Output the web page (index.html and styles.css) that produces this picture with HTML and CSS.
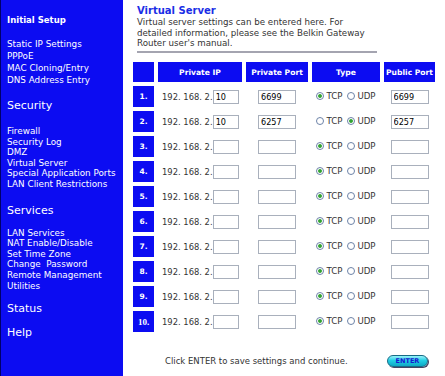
FILE: index.html
```html
<!DOCTYPE html>
<html>
<head>
<meta charset="utf-8">
<link rel="stylesheet" href="styles.css">
</head>
<body>
<div class="page">
  <nav class="side">
    <div class="sec sec-small">Initial Setup</div>
    <ul class="links links-first">
      <li>Static IP Settings</li>
      <li>PPPoE</li>
      <li>MAC Cloning/Entry</li>
      <li>DNS Address Entry</li>
    </ul>
    <div class="sec">Security</div>
    <ul class="links links-mid">
      <li>Firewall</li>
      <li>Security Log</li>
      <li>DMZ</li>
      <li>Virtual Server</li>
      <li>Special Application Ports</li>
      <li>LAN Client Restrictions</li>
    </ul>
    <div class="sec">Services</div>
    <ul class="links links-last">
      <li>LAN Services</li>
      <li>NAT Enable/Disable</li>
      <li>Set Time Zone</li>
      <li>Change&nbsp; Password</li>
      <li>Remote Management</li>
      <li>Utilities</li>
    </ul>
    <div class="sec">Status</div>
    <div class="sec sec-help">Help</div>
  </nav>
  <main class="main">
    <header class="intro">
      <h1 class="title">Virtual Server</h1>
      <p class="desc">Virtual server settings can be entered here. For<br>detailed information, please see the Belkin Gateway<br>Router user's manual.</p>
    </header>
    <table class="vs">
      <thead>
        <tr>
          <th class="c-num"></th>
          <th class="c-ip">Private IP</th>
          <th class="c-pp">Private Port</th>
          <th class="c-type">Type</th>
          <th class="c-pub">Public Port</th>
        </tr>
      </thead>
      <tbody>
        <tr>
          <td class="num">1.</td>
          <td class="ip"><div class="ipwrap"><span>192. 168. 2.</span><input class="in in-ip" value="10"></div></td>
          <td class="cen"><input class="in in-port" value="6699"></td>
          <td class="cen"><div class="type"><input type="radio" name="t1" checked><span>TCP</span><input type="radio" name="t1"><span>UDP</span></div></td>
          <td class="cen"><input class="in in-port" value="6699"></td>
        </tr>
        <tr>
          <td class="num">2.</td>
          <td class="ip"><div class="ipwrap"><span>192. 168. 2.</span><input class="in in-ip" value="10"></div></td>
          <td class="cen"><input class="in in-port" value="6257"></td>
          <td class="cen"><div class="type"><input type="radio" name="t2"><span>TCP</span><input type="radio" name="t2" checked><span>UDP</span></div></td>
          <td class="cen"><input class="in in-port" value="6257"></td>
        </tr>
        <tr>
          <td class="num">3.</td>
          <td class="ip"><div class="ipwrap"><span>192. 168. 2.</span><input class="in in-ip" value=""></div></td>
          <td class="cen"><input class="in in-port" value=""></td>
          <td class="cen"><div class="type"><input type="radio" name="t3" checked><span>TCP</span><input type="radio" name="t3"><span>UDP</span></div></td>
          <td class="cen"><input class="in in-port" value=""></td>
        </tr>
        <tr>
          <td class="num">4.</td>
          <td class="ip"><div class="ipwrap"><span>192. 168. 2.</span><input class="in in-ip" value=""></div></td>
          <td class="cen"><input class="in in-port" value=""></td>
          <td class="cen"><div class="type"><input type="radio" name="t4" checked><span>TCP</span><input type="radio" name="t4"><span>UDP</span></div></td>
          <td class="cen"><input class="in in-port" value=""></td>
        </tr>
        <tr>
          <td class="num">5.</td>
          <td class="ip"><div class="ipwrap"><span>192. 168. 2.</span><input class="in in-ip" value=""></div></td>
          <td class="cen"><input class="in in-port" value=""></td>
          <td class="cen"><div class="type"><input type="radio" name="t5" checked><span>TCP</span><input type="radio" name="t5"><span>UDP</span></div></td>
          <td class="cen"><input class="in in-port" value=""></td>
        </tr>
        <tr>
          <td class="num">6.</td>
          <td class="ip"><div class="ipwrap"><span>192. 168. 2.</span><input class="in in-ip" value=""></div></td>
          <td class="cen"><input class="in in-port" value=""></td>
          <td class="cen"><div class="type"><input type="radio" name="t6" checked><span>TCP</span><input type="radio" name="t6"><span>UDP</span></div></td>
          <td class="cen"><input class="in in-port" value=""></td>
        </tr>
        <tr>
          <td class="num">7.</td>
          <td class="ip"><div class="ipwrap"><span>192. 168. 2.</span><input class="in in-ip" value=""></div></td>
          <td class="cen"><input class="in in-port" value=""></td>
          <td class="cen"><div class="type"><input type="radio" name="t7" checked><span>TCP</span><input type="radio" name="t7"><span>UDP</span></div></td>
          <td class="cen"><input class="in in-port" value=""></td>
        </tr>
        <tr>
          <td class="num">8.</td>
          <td class="ip"><div class="ipwrap"><span>192. 168. 2.</span><input class="in in-ip" value=""></div></td>
          <td class="cen"><input class="in in-port" value=""></td>
          <td class="cen"><div class="type"><input type="radio" name="t8" checked><span>TCP</span><input type="radio" name="t8"><span>UDP</span></div></td>
          <td class="cen"><input class="in in-port" value=""></td>
        </tr>
        <tr>
          <td class="num">9.</td>
          <td class="ip"><div class="ipwrap"><span>192. 168. 2.</span><input class="in in-ip" value=""></div></td>
          <td class="cen"><input class="in in-port" value=""></td>
          <td class="cen"><div class="type"><input type="radio" name="t9" checked><span>TCP</span><input type="radio" name="t9"><span>UDP</span></div></td>
          <td class="cen"><input class="in in-port" value=""></td>
        </tr>
        <tr>
          <td class="num num-serif">10.</td>
          <td class="ip"><div class="ipwrap"><span>192. 168. 2.</span><input class="in in-ip" value=""></div></td>
          <td class="cen"><input class="in in-port" value=""></td>
          <td class="cen"><div class="type"><input type="radio" name="t10" checked><span>TCP</span><input type="radio" name="t10"><span>UDP</span></div></td>
          <td class="cen"><input class="in in-port" value=""></td>
        </tr>
      </tbody>
    </table>
    <div class="footer">
      <span class="hint">Click ENTER to save settings and continue.</span>
      <button class="enter">ENTER</button>
    </div>
  </main>
</div>
</body>
</html>
```
FILE: styles.css
```css
html, body {
  margin: 0;
  padding: 0;
  background: #ffffff;
}
body {
  font-family: "DejaVu Sans", Verdana, sans-serif;
  width: 445px;
  height: 376px;
  overflow: hidden;
}
.page {
  display: flex;
  height: 376px;
}
.side {
  flex: none;
  width: 123px;
  background: #0c0cf2;
  border-left: 1px solid #00006a;
  color: #ffffff;
  padding: 14px 0 0 6px;
  box-sizing: border-box;
}
.sec {
  font-size: 11px;
  line-height: 14px;
  height: 14px;
}
.sec-small {
  font-size: 8.5px;
  font-weight: bold;
  line-height: 12px;
  height: 12px;
}
.links {
  list-style: none;
  margin: 0;
  padding: 0;
  font-size: 8.8px;
  line-height: 10.6px;
  white-space: nowrap;
}
.links-first {
  line-height: 12px;
  margin-top: 12px;
  margin-bottom: 13px;
}
.links-mid {
  margin-top: 13px;
  margin-bottom: 14px;
}
.links-last {
  margin-top: 10px;
  margin-bottom: 11px;
}
.sec-help {
  margin-top: 10px;
}
.main {
  flex: 1;
}
.intro {
  margin-left: 14px;
  width: 240px;
  padding-top: 4px;
  border-bottom: 2px solid #a4a4b0;
  padding-bottom: 2px;
}
.title {
  margin: 0;
  font-size: 10px;
  line-height: 13px;
  font-weight: bold;
  color: #1a2ee6;
}
.desc {
  margin: 0;
  font-size: 8.7px;
  line-height: 10.7px;
  color: #333333;
  white-space: nowrap;
}
.vs {
  margin: 5px 0 0 6px;
  border-collapse: separate;
  border-spacing: 4px;
  font-size: 8px;
  table-layout: fixed;
}
.vs th {
  background: #0c0cf2;
  color: #ffffff;
  font-weight: bold;
  font-size: 7.6px;
  height: 20px;
  padding: 0;
  text-align: center;
  white-space: nowrap;
}
.c-num { width: 21px; }
.c-ip { width: 84px; }
.c-pp { width: 62px; }
.c-type { width: 68px; }
.c-pub { width: 51px; }
.vs td {
  height: 21px;
  padding: 0;
  vertical-align: middle;
}
.vs td.num {
  background: #0c0cf2;
  color: #ffffff;
  font-weight: bold;
  font-size: 7.5px;
  text-align: center;
}
.vs td.num-serif {
  font-family: "Liberation Serif", "Times New Roman", serif;
  font-size: 9px;
}
.vs td.cen {
  text-align: center;
}
.ipwrap {
  display: flex;
  align-items: center;
  padding-left: 4px;
  color: #333333;
  white-space: pre;
  font-size: 8.4px;
}
.ipwrap span {
  flex: none;
}
.in {
  box-sizing: border-box;
  height: 14px;
  border: 1px solid #a9b0bc;
  background: #ffffff;
  padding: 0 2px;
  margin: 0;
  font-family: "Liberation Sans Narrow", "DejaVu Sans Condensed", "Liberation Sans", sans-serif;
  font-size: 9px;
  color: #000000;
  vertical-align: middle;
  outline: none;
}
.in-ip { width: 26px; flex: none; }
.in-port { width: 38px; }
.type {
  display: inline-flex;
  align-items: center;
  color: #333333;
  font-size: 8.6px;
}
.type input {
  appearance: none;
  -webkit-appearance: none;
  width: 8px;
  height: 8px;
  margin: 0 2px 0 0;
  border: 1px solid #6d83a8;
  border-radius: 50%;
  background: #ffffff;
  box-sizing: border-box;
}
.type input:checked {
  background: radial-gradient(circle, #2f9a2f 0, #3aaa3a 1.5px, #ffffff 2.3px);
}
.type span + input {
  margin-left: 5px;
}
.footer {
  display: flex;
  align-items: center;
  margin-top: 19px;
  padding-left: 42px;
  padding-right: 17px;
  height: 12px;
}
.hint {
  font-size: 8.5px;
  color: #333333;
  white-space: nowrap;
}
.enter {
  margin-left: auto;
  width: 41px;
  height: 12px;
  padding: 0;
  border: 1px solid #176b86;
  border-radius: 6px;
  background: linear-gradient(#9af2fa, #22cfe4 45%, #0ea9c6);
  box-shadow: 1px 1px 0 #444466;
  color: #1818d0;
  font-family: "DejaVu Sans", sans-serif;
  font-weight: bold;
  font-size: 6.5px;
  line-height: 10px;
}
```
